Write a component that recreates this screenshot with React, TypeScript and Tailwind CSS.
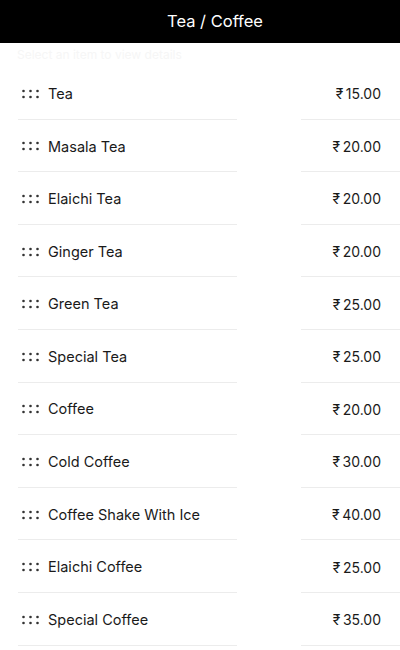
const items: [string, string][] = [
  ["Tea", "15.00"],
  ["Masala Tea", "20.00"],
  ["Elaichi Tea", "20.00"],
  ["Ginger Tea", "20.00"],
  ["Green Tea", "25.00"],
  ["Special Tea", "25.00"],
  ["Coffee", "20.00"],
  ["Cold Coffee", "30.00"],
  ["Coffee Shake With Ice", "40.00"],
  ["Elaichi Coffee", "25.00"],
  ["Special Coffee", "35.00"],
];

function Handle() {
  return (
    <svg width="18" height="10" viewBox="0 0 18 10" className="shrink-0 text-[#333]" aria-hidden>
      {[1.5, 8.5, 15.5].map((x) => (
        <g key={x} fill="currentColor">
          <circle cx={x} cy="2" r="1.3" />
          <circle cx={x} cy="8" r="1.3" />
        </g>
      ))}
    </svg>
  );
}

export default function App() {
  return (
    <div className="h-[650px] w-[400px] overflow-hidden bg-white font-['Inter',sans-serif] text-[#1a1a1a]">
      <header className="flex h-[43px] items-center justify-center bg-black pl-[30px] text-[16.5px] text-white">
        Tea / Coffee
      </header>
      <div className="flex h-[24px] items-center pl-[17px] text-[12px] text-[#f6f6f6]">
        Select an item to view details
      </div>
      <ul>
        {items.map(([name, price]) => (
          <li key={name} className="grid h-[52.6px] grid-cols-[219px_1fr] gap-x-[64px] pl-[18px]">
            <div className="flex items-center gap-[8px] border-b border-[#ececec] pl-[4px] pt-[2px] text-[14.5px]">
              <Handle />
              <span>{name}</span>
            </div>
            <div className="flex items-center justify-end border-b border-[#ececec] pr-[19px] pt-[2px] text-[14px]">
              ₹{"\u2009"}{price}
            </div>
          </li>
        ))}
      </ul>
    </div>
  );
}
